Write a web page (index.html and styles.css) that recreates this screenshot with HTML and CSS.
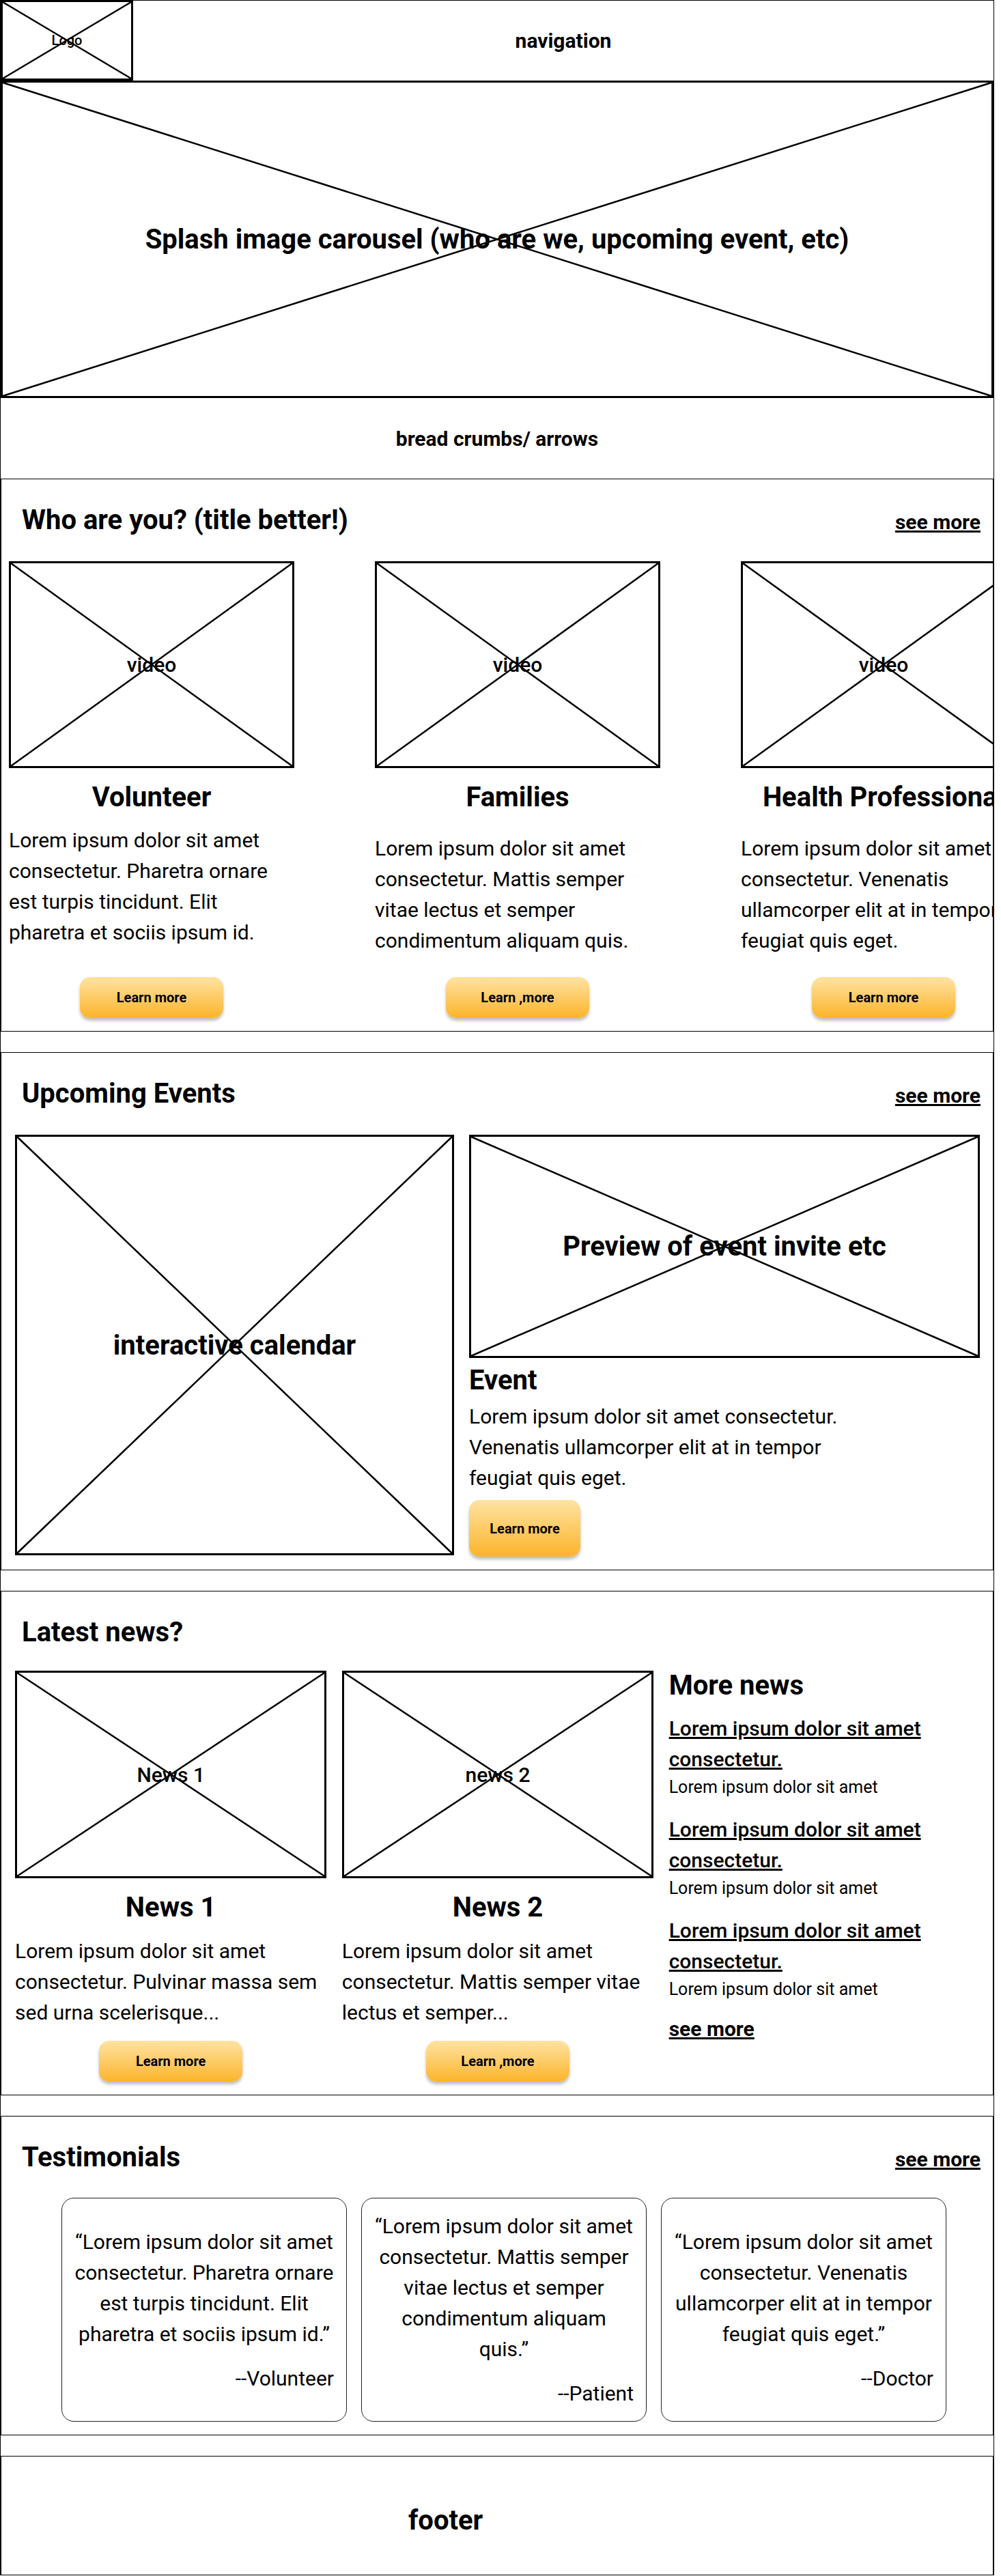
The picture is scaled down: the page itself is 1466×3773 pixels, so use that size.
FILE: index.html
```html
<!DOCTYPE html>
<html lang="en">
<head>
  <meta charset="UTF-8" />
  <meta name="viewport" content="width=device-width, initial-scale=1.0"/>
  <title>Home page wireframe</title>
  <link rel="stylesheet" href="styles.css">
</head>
<body>
  <div class="page">

    <header class="top-bar">
      <div class="ph logo">
        <span class="ph-label">Logo</span>
        <svg class="ph-x"><line x1="0" y1="0" x2="100%" y2="100%"/><line x1="100%" y1="0" x2="0" y2="100%"/></svg>
      </div>
      <nav class="nav">navigation</nav>
    </header>

    <div class="ph hero">
      <span class="ph-label big">Splash image carousel (who are we, upcoming event, etc)</span>
      <svg class="ph-x"><line x1="0" y1="0" x2="100%" y2="100%"/><line x1="100%" y1="0" x2="0" y2="100%"/></svg>
    </div>

    <div class="crumbs">bread crumbs/ arrows</div>

    <!-- who are you -->
    <section class="block">
      <div class="block-head">
        <h2>Who are you? (title better!)</h2>
        <a class="see-more" href="#">see more</a>
      </div>
      <div class="who-grid">
        <div class="who-col">
          <div class="ph video">
            <span class="ph-label">video</span>
            <svg class="ph-x"><line x1="0" y1="0" x2="100%" y2="100%"/><line x1="100%" y1="0" x2="0" y2="100%"/></svg>
          </div>
          <h3 class="col-title">Volunteer</h3>
          <p class="col-text tight">Lorem ipsum dolor sit amet consectetur. Pharetra ornare est turpis tincidunt. Elit pharetra et sociis ipsum id.</p>
          <div class="col-action"><a class="btn" href="#">Learn more</a></div>
        </div>
        <div class="who-col">
          <div class="ph video">
            <span class="ph-label">video</span>
            <svg class="ph-x"><line x1="0" y1="0" x2="100%" y2="100%"/><line x1="100%" y1="0" x2="0" y2="100%"/></svg>
          </div>
          <h3 class="col-title">Families</h3>
          <p class="col-text">Lorem ipsum dolor sit amet consectetur. Mattis semper vitae lectus et semper condimentum aliquam quis.</p>
          <div class="col-action"><a class="btn" href="#">Learn ,more</a></div>
        </div>
        <div class="who-col">
          <div class="ph video">
            <span class="ph-label">video</span>
            <svg class="ph-x"><line x1="0" y1="0" x2="100%" y2="100%"/><line x1="100%" y1="0" x2="0" y2="100%"/></svg>
          </div>
          <h3 class="col-title">Health Professional</h3>
          <p class="col-text">Lorem ipsum dolor sit amet consectetur. Venenatis ullamcorper elit at in tempor feugiat quis eget.</p>
          <div class="col-action"><a class="btn" href="#">Learn more</a></div>
        </div>
      </div>
    </section>

    <!-- events -->
    <section class="block">
      <div class="block-head">
        <h2>Upcoming Events</h2>
        <a class="see-more" href="#">see more</a>
      </div>
      <div class="events-grid">
        <div class="ph calendar">
          <span class="ph-label big">interactive calendar</span>
          <svg class="ph-x"><line x1="0" y1="0" x2="100%" y2="100%"/><line x1="100%" y1="0" x2="0" y2="100%"/></svg>
        </div>
        <div class="event">
          <div class="ph preview">
            <span class="ph-label big">Preview of event invite etc</span>
            <svg class="ph-x"><line x1="0" y1="0" x2="100%" y2="100%"/><line x1="100%" y1="0" x2="0" y2="100%"/></svg>
          </div>
          <h3 class="event-title">Event</h3>
          <p class="event-text">Lorem ipsum dolor sit amet consectetur. Venenatis ullamcorper elit at in tempor feugiat quis eget.</p>
          <a class="btn tall" href="#">Learn more</a>
        </div>
      </div>
    </section>

    <!-- news -->
    <section class="block">
      <div class="block-head">
        <h2>Latest news?</h2>
      </div>
      <div class="news-grid">
        <div class="news-col">
          <div class="ph news-img">
            <span class="ph-label">News 1</span>
            <svg class="ph-x"><line x1="0" y1="0" x2="100%" y2="100%"/><line x1="100%" y1="0" x2="0" y2="100%"/></svg>
          </div>
          <h3 class="news-title">News 1</h3>
          <p class="news-text">Lorem ipsum dolor sit amet consectetur. Pulvinar massa sem sed urna scelerisque...</p>
          <div class="news-action"><a class="btn" href="#">Learn more</a></div>
        </div>
        <div class="news-col">
          <div class="ph news-img">
            <span class="ph-label">news 2</span>
            <svg class="ph-x"><line x1="0" y1="0" x2="100%" y2="100%"/><line x1="100%" y1="0" x2="0" y2="100%"/></svg>
          </div>
          <h3 class="news-title">News 2</h3>
          <p class="news-text">Lorem ipsum dolor sit amet consectetur. Mattis semper vitae lectus et semper...</p>
          <div class="news-action"><a class="btn" href="#">Learn ,more</a></div>
        </div>
        <div class="more-news">
          <h3>More news</h3>
          <div class="more-item">
            <a class="more-link" href="#">Lorem ipsum dolor sit amet consectetur.</a>
            <div class="more-sub">Lorem ipsum dolor sit amet</div>
          </div>
          <div class="more-item">
            <a class="more-link" href="#">Lorem ipsum dolor sit amet consectetur.</a>
            <div class="more-sub">Lorem ipsum dolor sit amet</div>
          </div>
          <div class="more-item">
            <a class="more-link" href="#">Lorem ipsum dolor sit amet consectetur.</a>
            <div class="more-sub">Lorem ipsum dolor sit amet</div>
          </div>
          <a class="more-all" href="#">see more</a>
        </div>
      </div>
    </section>

    <!-- testimonials -->
    <section class="block">
      <div class="block-head">
        <h2>Testimonials</h2>
        <a class="see-more" href="#">see more</a>
      </div>
      <div class="cards">
        <div class="card">
          <p class="quote">“Lorem ipsum dolor sit amet consectetur. Pharetra ornare est turpis tincidunt. Elit pharetra et sociis ipsum id.”</p>
          <p class="author">--Volunteer</p>
        </div>
        <div class="card">
          <p class="quote">“Lorem ipsum dolor sit amet consectetur. Mattis semper vitae lectus et semper condimentum aliquam<br>quis.”</p>
          <p class="author">--Patient</p>
        </div>
        <div class="card">
          <p class="quote">“Lorem ipsum dolor sit amet consectetur. Venenatis ullamcorper elit at in tempor feugiat quis eget.”</p>
          <p class="author">--Doctor</p>
        </div>
      </div>
    </section>

    <footer class="footer">footer</footer>

  </div>
</body>
</html>
```

FILE: styles.css
```css
body {
  margin: 0;
  background: #fff;
  color: #000;
  font-family: Roboto, "Liberation Sans", Arial, sans-serif;
}

.page {
  width: 1456px;
  box-sizing: border-box;
  border-left: 1px solid #000;
  border-right: 1px solid #000;
}

/* placeholder boxes with the X across */
.ph {
  position: relative;
  box-sizing: border-box;
  border: 3px solid #000;
  display: flex;
  align-items: center;
  justify-content: center;
  text-align: center;
}

.ph-x {
  position: absolute;
  top: 0;
  left: 0;
  width: 100%;
  height: 100%;
  overflow: visible;
}

.ph-x line {
  stroke: #000;
  stroke-width: 2.5;
}

.ph-label {
  font-size: 30px;
  font-weight: 500;
}

.ph-label.big {
  font-size: 40px;
  font-weight: 700;
}

/* top */
.top-bar {
  display: flex;
  height: 118px;
}

.logo {
  width: 194px;
  height: 118px;
  flex: none;
}

.logo .ph-label {
  font-size: 20px;
}

.nav {
  flex: 1;
  display: flex;
  align-items: center;
  justify-content: center;
  border-top: 1px solid #000;
  font-size: 30px;
  font-weight: 700;
}

.hero {
  height: 465px;
}

.crumbs {
  height: 118px;
  display: flex;
  align-items: center;
  justify-content: center;
  font-size: 30px;
  font-weight: 700;
}

/* sections */
.block {
  border: 1px solid #000;
  overflow: hidden;
  padding: 36px 0 19px;
}

.block + .block {
  margin-top: 30px;
}

.block-head {
  display: flex;
  justify-content: space-between;
  align-items: baseline;
  padding: 0 18px 0 30px;
}

.block-head h2 {
  margin: 0;
  font-size: 40px;
  line-height: 47px;
  font-weight: 700;
}

.see-more {
  color: #000;
  font-size: 30px;
  font-weight: 700;
}

.btn {
  display: inline-flex;
  align-items: center;
  justify-content: center;
  width: 210px;
  height: 60px;
  border-radius: 15px;
  background: linear-gradient(180deg, #ffe3a3 0%, #fcb42a 100%);
  box-shadow: 0 4px 4px rgba(0, 0, 0, 0.25);
  color: #000;
  font-size: 20px;
  font-weight: 700;
  text-decoration: none;
}

.btn.tall {
  width: 163px;
  height: 83px;
  margin-top: 10px;
}

/* who are you */
.who-grid {
  display: grid;
  grid-template-columns: repeat(3, 418px);
  column-gap: 118px;
  padding-left: 11px;
  margin-top: 37px;
}

.who-col {
  display: flex;
  flex-direction: column;
}

.video {
  height: 303px;
}

.col-title {
  margin: 19px 0 0;
  font-size: 40px;
  line-height: 47px;
  font-weight: 700;
  text-align: center;
  white-space: nowrap;
}

.col-text {
  margin: 29px 0 0;
  font-size: 30px;
  line-height: 45px;
}

.col-text.tight {
  margin-top: 17px;
}

.col-action {
  margin-top: auto;
  padding-top: 31px;
  display: flex;
  justify-content: center;
}

/* events */
.events-grid {
  display: grid;
  grid-template-columns: 643px 748px;
  column-gap: 22px;
  padding: 0 18px 0 20px;
  margin-top: 37px;
  align-items: start;
}

.calendar {
  height: 616px;
}

.preview {
  height: 327px;
}

.event-title {
  margin: 9px 0 0;
  font-size: 40px;
  line-height: 47px;
  font-weight: 700;
}

.event-text {
  margin: 7px 0 0;
  width: 590px;
  font-size: 30px;
  line-height: 45px;
}

/* news */
.news-grid {
  display: grid;
  grid-template-columns: repeat(3, 1fr);
  column-gap: 22.5px;
  padding: 0 18px 0 20px;
  margin-top: 33px;
  align-items: start;
}

.news-img {
  height: 304px;
}

.news-title {
  margin: 19px 0 0;
  font-size: 40px;
  line-height: 47px;
  font-weight: 700;
  text-align: center;
}

.news-text {
  margin: 18px 0 0;
  font-size: 30px;
  line-height: 45px;
}

.news-action {
  padding-top: 19px;
  display: flex;
  justify-content: center;
}

.more-news h3 {
  margin: -2px 0 0;
  font-size: 40px;
  line-height: 47px;
  font-weight: 700;
}

.more-item {
  margin-top: 21px;
}

.more-news h3 + .more-item {
  margin-top: 17px;
}

.more-link {
  display: block;
  color: #000;
  font-size: 30px;
  line-height: 45px;
  font-weight: 500;
}

.more-sub {
  margin-top: 1px;
  font-size: 25px;
  line-height: 36px;
}

.more-all {
  display: inline-block;
  margin-top: 17px;
  color: #000;
  font-size: 30px;
  line-height: 45px;
  font-weight: 700;
}

/* testimonials */
.cards {
  display: flex;
  gap: 21px;
  padding-left: 88px;
  margin-top: 36px;
}

.card {
  width: 418px;
  height: 328px;
  box-sizing: border-box;
  border: 1px solid #222;
  border-radius: 18px;
  padding: 0 18px;
  display: flex;
  flex-direction: column;
  justify-content: center;
}

.quote {
  margin: 0;
  font-size: 30px;
  line-height: 45px;
  text-align: center;
}

.author {
  margin: 20px 0 0;
  font-size: 30px;
  line-height: 45px;
  text-align: right;
}

.footer {
  margin-top: 30px;
  height: 175px;
  box-sizing: border-box;
  border: 1px solid #000;
  display: flex;
  align-items: center;
  padding: 13px 0 0 596px;
  font-size: 40px;
  font-weight: 700;
}
```
